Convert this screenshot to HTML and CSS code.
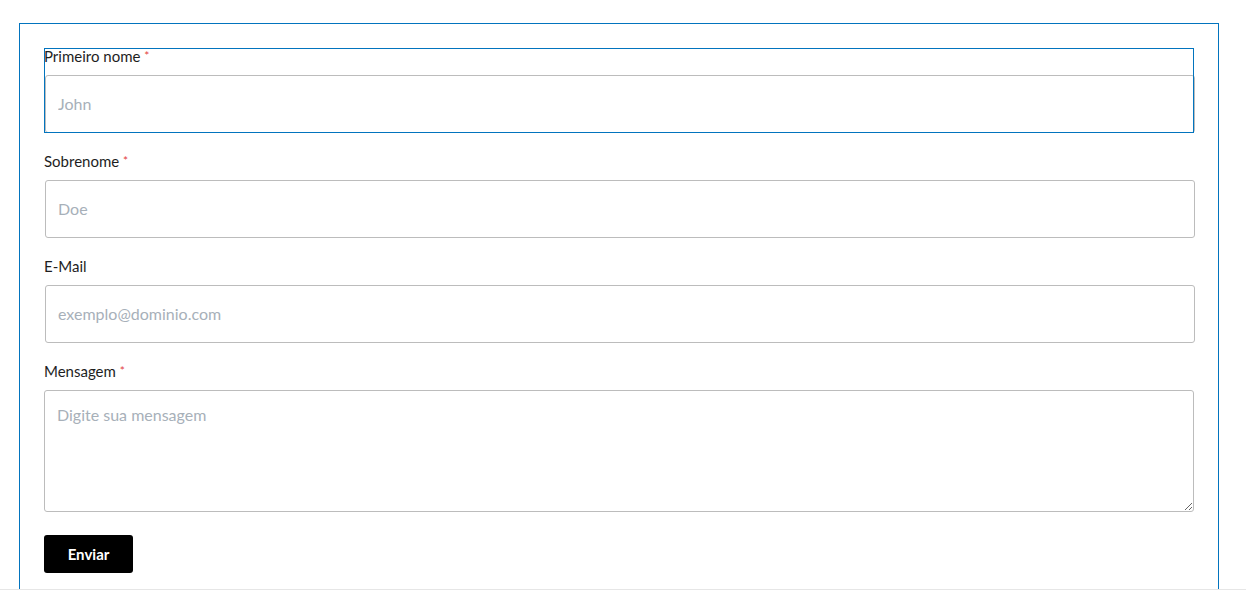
FILE: index.html
```html
<!DOCTYPE html>
<html lang="pt">
<head>
<meta charset="utf-8">
<title>Formulário</title>
<link rel="stylesheet" href="styles.css">
</head>
<body>
<div class="page">
  <form class="card">
    <div class="field field-focus">
      <label class="label" for="fn">Primeiro nome <span class="req">*</span></label>
      <input class="input" id="fn" type="text" placeholder="John">
    </div>
    <div class="field">
      <label class="label" for="ln">Sobrenome <span class="req">*</span></label>
      <input class="input" id="ln" type="text" placeholder="Doe">
    </div>
    <div class="field">
      <label class="label" for="em">E-Mail</label>
      <input class="input" id="em" type="email" placeholder="exemplo@dominio.com">
    </div>
    <div class="field">
      <label class="label" for="msg">Mensagem <span class="req">*</span></label>
      <textarea class="textarea" id="msg" placeholder="Digite sua mensagem"></textarea>
    </div>
    <button class="btn" type="button">Enviar</button>
  </form>
</div>
<div class="footer"></div>
</body>
</html>
```
FILE: styles.css
```css
* { box-sizing: border-box; }
html, body { margin: 0; padding: 0; background: #fff; }
body {
  font-family: Lato, "Open Sans", sans-serif;
  color: #1e1e1e;
  overflow: hidden;
}
.page {
  padding: 23px 0 0 19px;
}
.card {
  width: 1200px;
  border: 1px solid #0274be;
  border-bottom: none;
  padding: 24px 24px 16px 24px;
  display: flex;
  flex-direction: column;
  gap: 20px;
}
.field {
  display: flex;
  flex-direction: column;
}
.field-focus {
  outline: 1px solid #0274be;
  outline-offset: -1px;
}
.label {
  display: block;
  height: 17px;
  font-size: 15px;
  line-height: 17px;
  margin-bottom: 10px;
  color: #1e1e1e;
}
.req { color: #e33f3f; font-size: 12px; line-height: 0; vertical-align: 2px; }
.input {
  height: 58px;
  margin-left: 1px;
  margin-right: -1px;
  border: 1px solid #bcbcbc;
  border-radius: 3px;
  padding: 0 12px 1px 12px;
  font-family: Lato, "Open Sans", sans-serif;
  font-size: 16px;
  color: #333;
  background: #fff;
}
.textarea {
  height: 122px;
  border: 1px solid #bcbcbc;
  border-radius: 3px;
  padding: 14px 12px 12px 12px;
  font-family: Lato, "Open Sans", sans-serif;
  font-size: 16px;
  color: #333;
  background: #fff;
  resize: vertical;
}
.input::placeholder, .textarea::placeholder { color: #a7b0b9; }
.input:focus, .textarea:focus { outline: none; }
.btn {
  margin-top: 3px;
  width: 89px;
  height: 38px;
  background: #000;
  color: #fff;
  border: none;
  border-radius: 3px;
  font-family: Lato, "Open Sans", sans-serif;
  font-weight: 700;
  font-size: 15px;
  cursor: pointer;
}
.footer {
  border-top: 1px solid #e6e6e6;
  height: 10px;
}
```
